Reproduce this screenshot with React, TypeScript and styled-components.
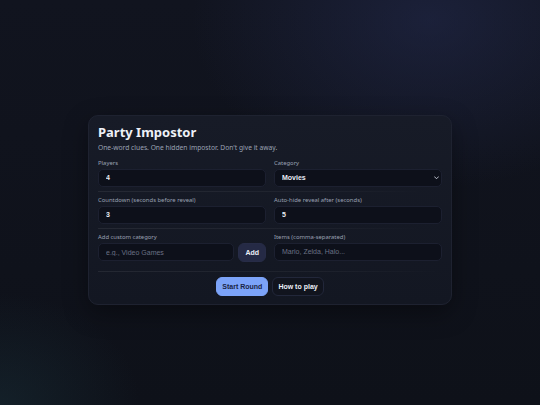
import React, { useState } from "react";
import styled, { createGlobalStyle } from "styled-components";

const GlobalStyle = createGlobalStyle`
  html, body {
    margin: 0;
    padding: 0;
    height: 100%;
  }
  body {
    font-family: "Noto Sans", "Open Sans", sans-serif;
    background-color: #0e1119;
    background-image:
      radial-gradient(ellipse 340px 240px at 430px 20px, rgba(40, 48, 90, 0.45), transparent 70%),
      radial-gradient(ellipse 200px 160px at 0px 405px, rgba(30, 60, 70, 0.35), transparent 70%),
      linear-gradient(180deg, #11141f 0%, #0e1119 100%);
    color: #e6e9f2;
  }
`;

const Page = styled.div`
  min-height: 100vh;
  box-sizing: border-box;
  padding-top: 14px;
  display: flex;
  align-items: center;
  justify-content: center;
`;

const Card = styled.div`
  width: 364px;
  box-sizing: border-box;
  padding: 8px 9px 8px;
  background: linear-gradient(180deg, #171b27 0%, #131722 100%);
  border: 1px solid #1e2230;
  border-radius: 10px;
  box-shadow: 0 8px 24px rgba(0, 0, 0, 0.35);
`;

const Title = styled.h1`
  margin: 0;
  font-size: 13px;
  line-height: 16px;
  font-weight: 700;
  color: #eef1f8;
`;

const Subtitle = styled.p`
  margin: 4px 0 8px;
  font-size: 6.7px;
  line-height: 8px;
  color: #9ba2b4;
`;

const Row = styled.div<{ $last?: boolean }>`
  display: grid;
  grid-template-columns: 1fr 1fr;
  column-gap: 8px;
  padding-bottom: ${(p) => (p.$last ? "10px" : "5px")};
  margin-bottom: 5px;
  position: relative;

  &::after {
    content: "";
    position: absolute;
    left: 0;
    right: ${(p) => (p.$last ? "0" : "20px")};
    bottom: 0;
    height: 1px;
    background: linear-gradient(90deg, rgba(255, 255, 255, 0.07), rgba(255, 255, 255, 0.04) 70%, transparent);
  }
`;

const Field = styled.label`
  display: flex;
  flex-direction: column;
  gap: 2px;
`;

const Label = styled.span`
  font-size: 5.9px;
  line-height: 7px;
  color: #9aa1b3;
`;

const Input = styled.input`
  display: block;
  height: 18px;
  box-sizing: border-box;
  width: 100%;
  min-width: 0;
  padding: 0 7px;
  background: #0d101a;
  border: 1px solid #1c2030;
  border-radius: 5px;
  color: #e8ebf4;
  font-family: "Liberation Sans", Arial, sans-serif;
  font-size: 7px;
  font-weight: 600;
  outline: none;

  &::placeholder {
    color: #6a7184;
    font-weight: 400;
  }
`;

const SelectWrap = styled.div`
  position: relative;
  display: flex;
`;

const Select = styled.select`
  display: block;
  height: 18px;
  box-sizing: border-box;
  width: 100%;
  margin: 0;
  padding: 0 7px;
  appearance: none;
  background: #0d101a;
  border: 1px solid #1c2030;
  border-radius: 5px;
  color: #e8ebf4;
  font-family: "Liberation Sans", Arial, sans-serif;
  font-size: 7px;
  font-weight: 600;
  outline: none;
`;

const Chevron = styled.svg`
  position: absolute;
  right: 3px;
  top: 7.5px;
  width: 5px;
  height: 3.5px;
  pointer-events: none;
`;

const InlineGroup = styled.div`
  display: flex;
  gap: 4.5px;
  align-items: center;
`;

const Button = styled.button<{ $variant: "primary" | "soft" | "ghost" }>`
  height: 19px;
  padding: 0 ${(p) => (p.$variant === "soft" ? "6px" : "5px")};
  border-radius: 6px;
  font-family: "Liberation Sans", Arial, sans-serif;
  font-size: 7px;
  font-weight: 700;
  cursor: pointer;
  flex-shrink: 0;
  border: 1px solid
    ${(p) =>
      p.$variant === "primary" ? "#7ca3f8" : p.$variant === "soft" ? "#272c47" : "#22273a"};
  background: ${(p) =>
    p.$variant === "primary" ? "#7ca3f8" : p.$variant === "soft" ? "#252a45" : "#11141e"};
  color: ${(p) => (p.$variant === "primary" ? "#1a2444" : "#eceff7")};
`;

const Actions = styled.div`
  display: flex;
  justify-content: center;
  gap: 4px;
`;

export default function App() {
  const [players, setPlayers] = useState("4");
  const [category, setCategory] = useState("Movies");
  const [countdown, setCountdown] = useState("3");
  const [autoHide, setAutoHide] = useState("5");

  return (
    <>
      <GlobalStyle />
      <Page>
        <Card>
          <Title>Party Impostor</Title>
          <Subtitle>One-word clues. One hidden impostor. Don't give it away.</Subtitle>

          <Row>
            <Field>
              <Label>Players</Label>
              <Input value={players} onChange={(e) => setPlayers(e.target.value)} />
            </Field>
            <Field>
              <Label>Category</Label>
              <SelectWrap>
                <Select value={category} onChange={(e) => setCategory(e.target.value)}>
                  <option>Movies</option>
                  <option>Animals</option>
                  <option>Food</option>
                </Select>
                <Chevron viewBox="0 0 10 6" fill="none">
                  <path d="M1 1l4 4 4-4" stroke="#cfd4e0" strokeWidth="1.8" strokeLinecap="round" strokeLinejoin="round" />
                </Chevron>
              </SelectWrap>
            </Field>
          </Row>

          <Row>
            <Field>
              <Label>Countdown (seconds before reveal)</Label>
              <Input value={countdown} onChange={(e) => setCountdown(e.target.value)} />
            </Field>
            <Field>
              <Label>Auto-hide reveal after (seconds)</Label>
              <Input value={autoHide} onChange={(e) => setAutoHide(e.target.value)} />
            </Field>
          </Row>

          <Row $last>
            <Field as="div">
              <Label>Add custom category</Label>
              <InlineGroup>
                <Input placeholder="e.g., Video Games" />
                <Button $variant="soft">Add</Button>
              </InlineGroup>
            </Field>
            <Field>
              <Label>Items (comma-separated)</Label>
              <Input placeholder="Mario, Zelda, Halo..." />
            </Field>
          </Row>

          <Actions>
            <Button $variant="primary">Start Round</Button>
            <Button $variant="ghost">How to play</Button>
          </Actions>
        </Card>
      </Page>
    </>
  );
}
